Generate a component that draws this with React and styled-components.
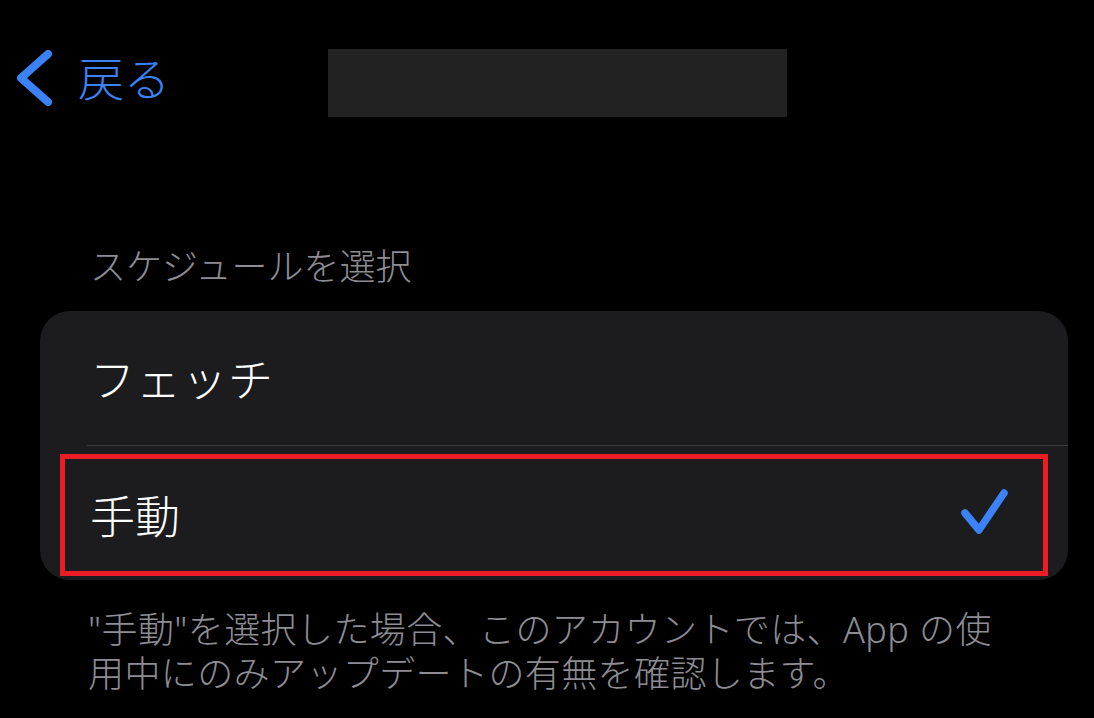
import React from "react";
import styled, { createGlobalStyle } from "styled-components";

const Global = createGlobalStyle`
  html, body { margin: 0; padding: 0; background: #000; }
  body {
    font-family: "Noto Sans", "Noto Sans CJK JP", sans-serif;
    font-weight: 300;
    -webkit-font-smoothing: antialiased;
  }
`;

const Page = styled.div`
  width: 1094px;
  height: 718px;
  background: #000;
  overflow: hidden;
  display: flex;
  flex-direction: column;
`;

const NavBar = styled.div`
  display: flex;
  align-items: flex-start;
  padding: 49px 0 0 16px;
  height: 68px;
`;

const BackButton = styled.div`
  display: flex;
  align-items: center;
  gap: 22px;
  margin-top: 1px;
  color: #3a82f6;
  font-size: 46px;
  line-height: 56px;
`;

const TitlePlaceholder = styled.div`
  width: 459px;
  height: 68px;
  background: #222222;
  margin-left: 158px;
`;

const SectionHeader = styled.div`
  margin: 128px 0 22px 90px;
  color: #8d8d93;
  font-size: 36px;
  line-height: 44px;
`;

const Card = styled.div`
  margin: 0 26px 0 40px;
  background: #1c1c1e;
  border-radius: 30px;
  overflow: hidden;
`;

const Row = styled.div`
  position: relative;
  height: 134px;
  display: flex;
  align-items: center;
  justify-content: space-between;
  padding: 0 58px 0 50px;
  color: #fff;
  font-size: 45px;
  line-height: 56px;
`;

const RowLabel = styled.span`
  margin-top: ${(p) => p.$offset || 0}px;
  letter-spacing: ${(p) => p.$spacing || 0}px;
`;

const Divider = styled.div`
  height: 1px;
  margin-left: 47px;
  background: #3a3a3c;
`;

const Highlight = styled.div`
  position: absolute;
  left: 20px;
  top: 8px;
  right: 20px;
  bottom: 4px;
  border: 5px solid #ec1c24;
  pointer-events: none;
`;

const Footer = styled.div`
  margin: 28px 0 0 88px;
  color: #8d8d93;
  font-size: 36px;
  letter-spacing: 0.4px;
  white-space: nowrap;
`;

const FooterLine = styled.div`
  height: 44px;
  line-height: 44px;
`;

const Chevron = () => (
  <svg width="40" height="56" viewBox="0 0 40 56" fill="none">
    <path
      d="M32 4 L5 28 L32 52"
      stroke="#3a82f6"
      strokeWidth="8"
      strokeLinecap="round"
      strokeLinejoin="round"
    />
  </svg>
);

const Check = () => (
  <svg width="50" height="50" viewBox="0 0 50 50" fill="none">
    <path
      d="M5 25 L19 42 L44 5"
      stroke="#3a82f6"
      strokeWidth="7.5"
      strokeLinecap="round"
      strokeLinejoin="round"
    />
  </svg>
);

export default function App() {
  return (
    <>
      <Global />
      <Page>
        <NavBar>
          <BackButton>
            <Chevron />
            <span>戻る</span>
          </BackButton>
          <TitlePlaceholder />
        </NavBar>
        <SectionHeader>スケジュールを選択</SectionHeader>
        <Card>
          <Row>
            <RowLabel $offset={4} $spacing={1}>フェッチ</RowLabel>
          </Row>
          <Divider />
          <Row>
            <RowLabel $offset={8}>手動</RowLabel>
            <Check />
            <Highlight />
          </Row>
        </Card>
        <Footer>
          <FooterLine>"手動"を選択した場合、このアカウントでは、App の使</FooterLine>
          <FooterLine>用中にのみアップデートの有無を確認します。</FooterLine>
        </Footer>
      </Page>
    </>
  );
}
